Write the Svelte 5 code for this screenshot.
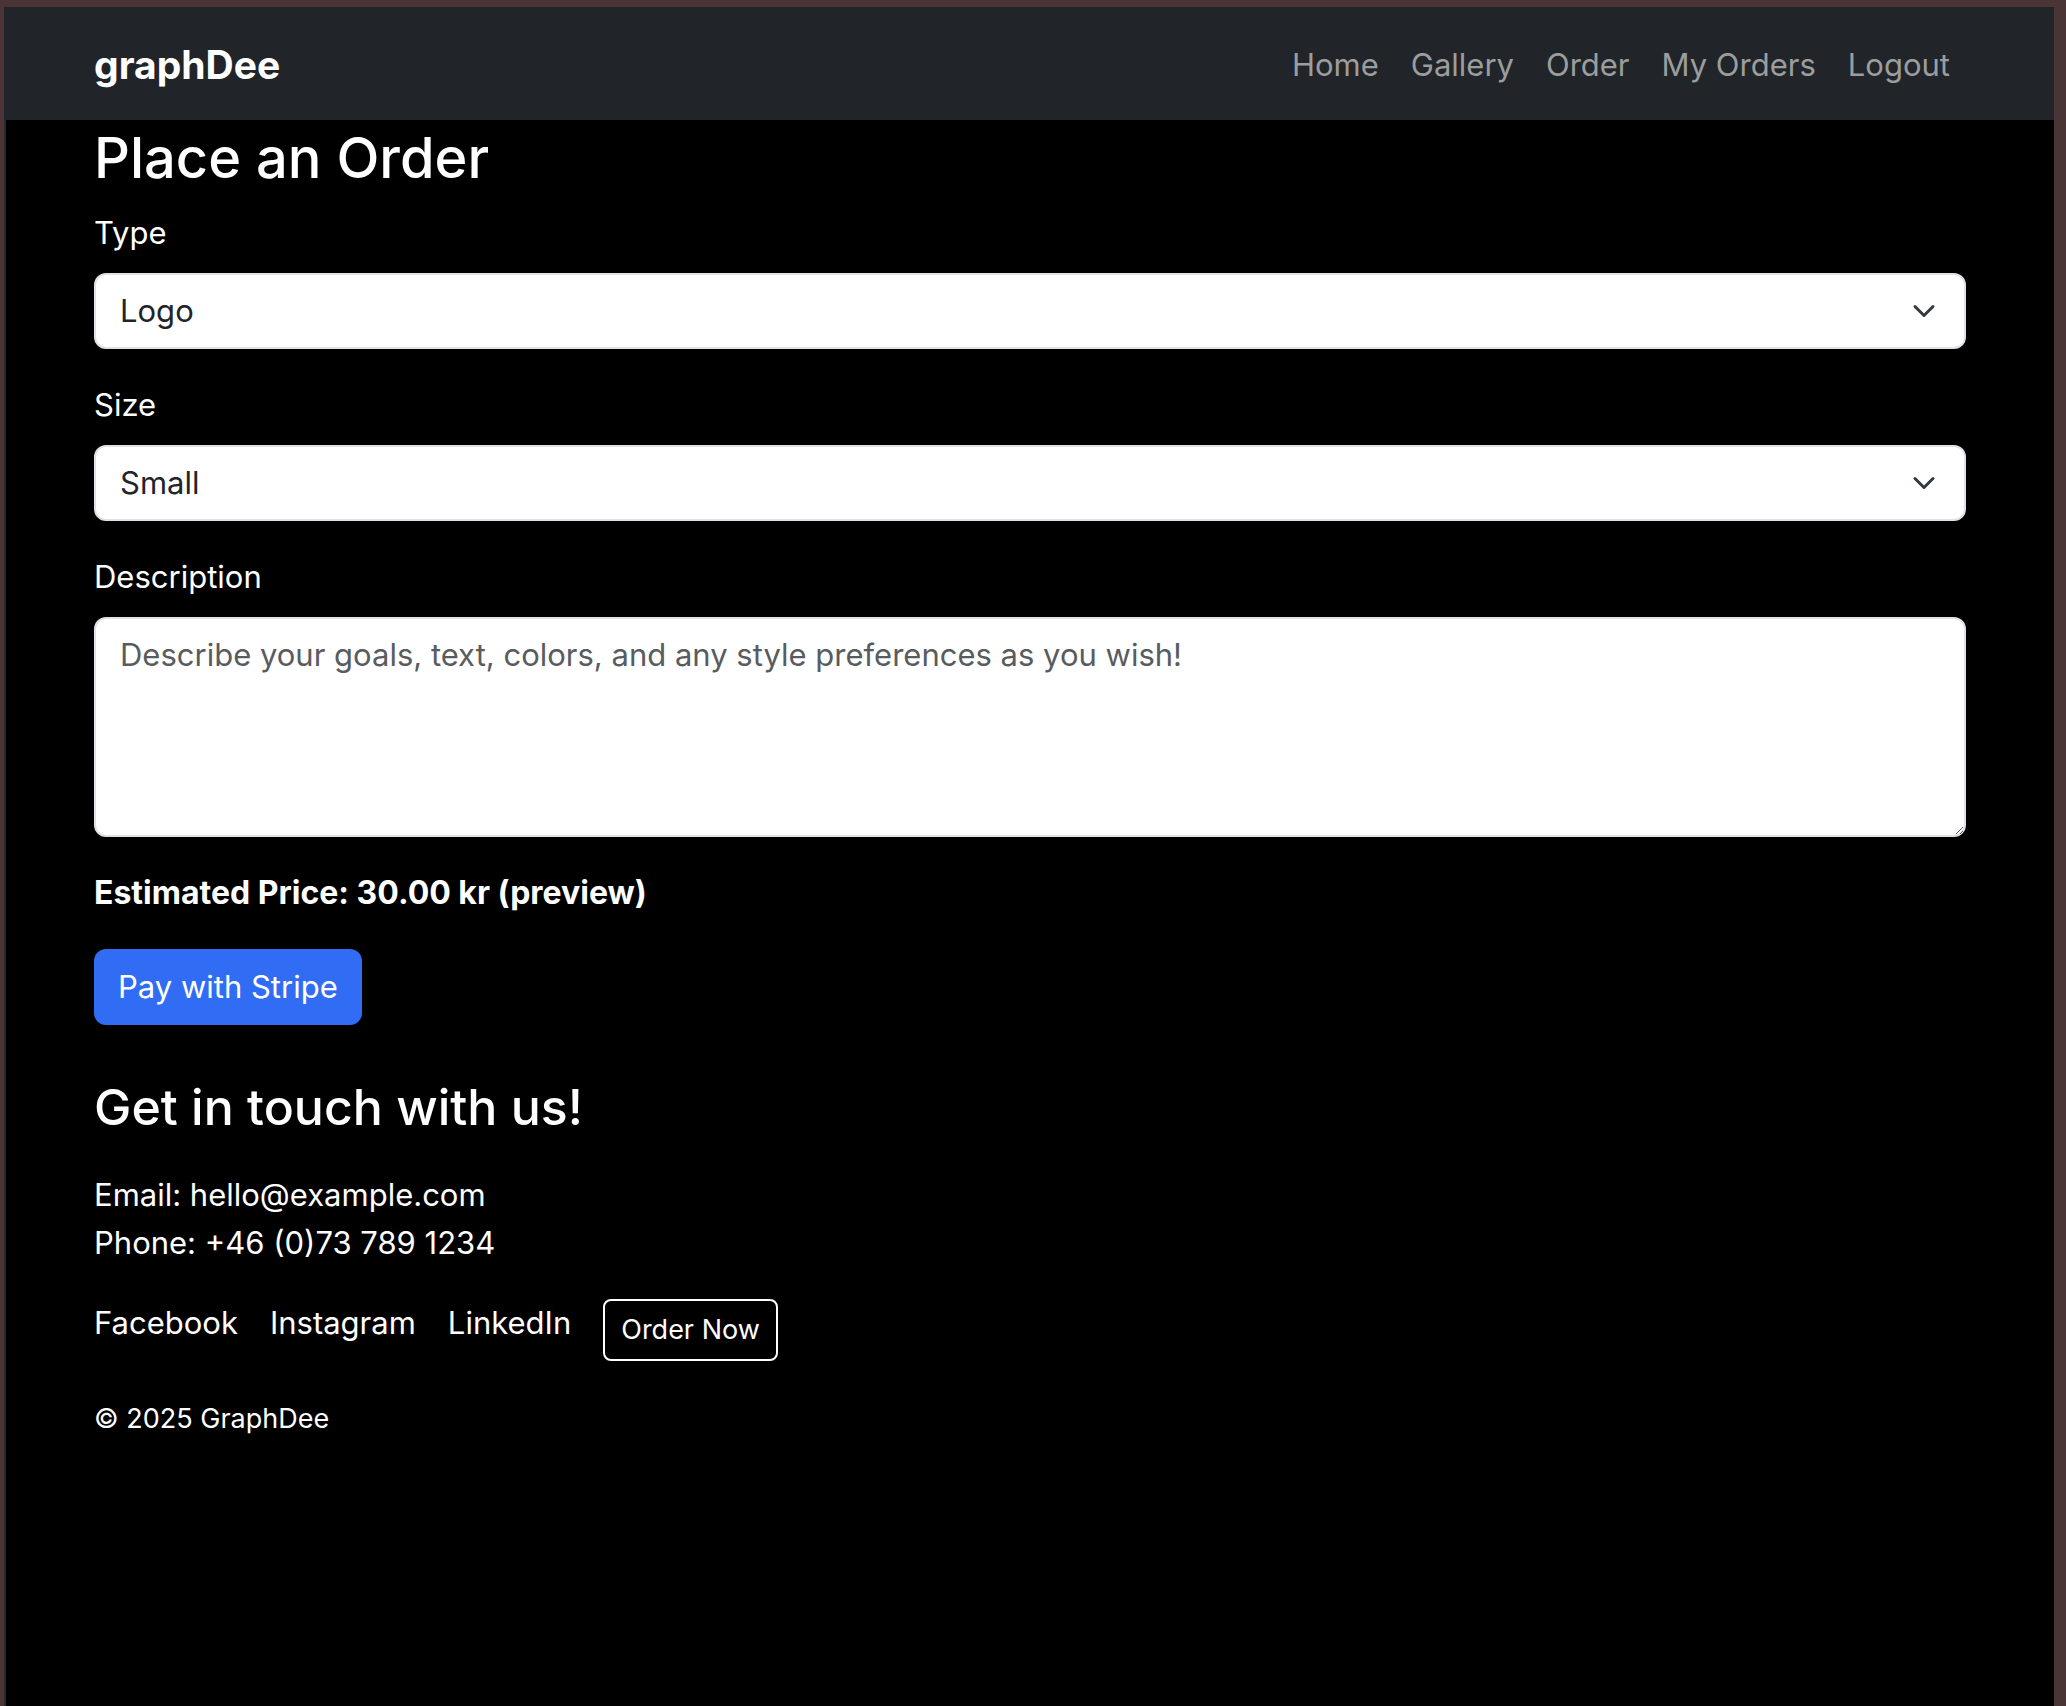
<script>
  const links = ['Home', 'Gallery', 'Order', 'My Orders', 'Logout'];
  const socials = ['Facebook', 'Instagram', 'LinkedIn'];
  const fields = [
    { id: 'type', label: 'Type', options: ['Logo', 'Poster', 'Banner'] },
    { id: 'size', label: 'Size', options: ['Small', 'Medium', 'Large'] }
  ];
</script>

<div class="frame">
  <div class="page">
    <header class="navbar">
      <a class="brand" href="#home">graphDee</a>
      <nav>
        {#each links as link}
          <a href="#{link}">{link}</a>
        {/each}
      </nav>
    </header>

    <main>
      <h1>Place an Order</h1>
      <form onsubmit={(e) => e.preventDefault()}>
        {#each fields as field}
          <div class="field">
            <label for={field.id}>{field.label}</label>
            <div class="select">
              <select id={field.id}>
                {#each field.options as option}
                  <option>{option}</option>
                {/each}
              </select>
              <svg viewBox="0 0 16 16" aria-hidden="true">
                <path d="m2 5 6 6 6-6" />
              </svg>
            </div>
          </div>
        {/each}
        <div class="field">
          <label for="description">Description</label>
          <textarea
            id="description"
            placeholder="Describe your goals, text, colors, and any style preferences as you wish!"
          ></textarea>
        </div>
        <p class="price">Estimated Price: 30.00 kr (preview)</p>
        <button class="pay" type="submit">Pay with Stripe</button>
      </form>
    </main>

    <footer>
      <h2>Get in touch with us!</h2>
      <p>Email: hello@example.com<br />Phone: +46 (0)73 789 1234</p>
      <div class="socials">
        {#each socials as social}
          <a href="#{social}">{social}</a>
        {/each}
        <a class="order" href="#order">Order Now</a>
      </div>
      <small>© 2025 GraphDee</small>
    </footer>
  </div>
</div>

<style>
  :global(body) {
    background: #4a3436;
  }
  .frame,
  .frame * {
    box-sizing: border-box;
  }
  .frame {
    min-height: 100vh;
    display: flex;
    padding: 7px 12px 0 4px;
    background: #4a3436;
    font-family: Inter, 'Liberation Sans', sans-serif;
    font-size: 31px;
    line-height: 48px;
    color: #fff;
  }
  .page {
    flex: 1;
    min-width: 0;
    background: #000;
    border-left: 2px solid #28282b;
  }
  a {
    color: inherit;
    text-decoration: none;
  }
  .navbar {
    display: flex;
    align-items: center;
    justify-content: space-between;
    min-height: 113px;
    margin-left: -2px;
    padding: 2px 88px 0 90px;
    background: #212529;
  }
  .brand {
    font-size: 39px;
    font-weight: 700;
  }
  nav {
    display: flex;
    gap: 32px;
    padding-right: 16px;
    color: #9b9d9e;
  }
  main,
  footer {
    padding: 0 88px;
  }
  h1,
  h2,
  p {
    margin: 0;
  }
  h1 {
    font-size: 56px;
    font-weight: 500;
    line-height: 76px;
    margin-bottom: 13px;
  }
  .field {
    margin-bottom: 32px;
  }
  label {
    display: block;
    margin-bottom: 16px;
  }
  .select {
    display: grid;
    align-items: center;
  }
  select,
  textarea {
    width: 100%;
    font: inherit;
    color: #212529;
    background: #fff;
    border: 2px solid #dee2e6;
    border-radius: 12px;
    padding: 12px 24px;
  }
  select {
    grid-area: 1 / 1;
    appearance: none;
    height: 76px;
  }
  .select svg {
    grid-area: 1 / 1;
    justify-self: end;
    width: 24px;
    height: 24px;
    margin-right: 30px;
    fill: none;
    stroke: #343a40;
    stroke-width: 2;
    stroke-linecap: round;
    stroke-linejoin: round;
    pointer-events: none;
  }
  textarea {
    display: block;
    height: 220px;
  }
  textarea::placeholder {
    color: #595c5f;
    opacity: 1;
  }
  .price {
    font-size: 32px;
    font-weight: 700;
    margin-bottom: 32px;
  }
  .pay {
    height: 76px;
    padding: 0 24px;
    border: 0;
    border-radius: 12px;
    background: #316df4;
    color: #fff;
    font: inherit;
  }
  footer {
    padding-top: 48px;
  }
  h2 {
    font-size: 50px;
    font-weight: 500;
    line-height: 68px;
    margin-bottom: 30px;
  }
  .socials {
    display: flex;
    align-items: flex-start;
    gap: 32px;
    margin: 32px 0 34px;
  }
  .order {
    padding: 5px 16px;
    border: 2px solid #fff;
    border-radius: 8px;
    font-size: 27px;
  }
  small {
    display: block;
    font-size: 27px;
  }
</style>
